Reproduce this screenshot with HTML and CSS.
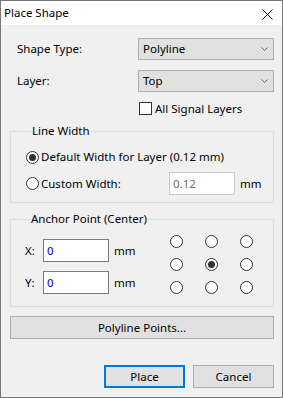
FILE: index.html
```html
<!doctype html>
<html lang="en">
  <head>
    <meta charset="UTF-8" />
    <meta name="viewport" content="width=device-width, initial-scale=1.0" />
    <title>Place Shape</title>
    <link rel="stylesheet" href="styles.css">
  </head>
  <body>
    <div class="dialog">
      <div class="titlebar">
        <span class="title">Place Shape</span>
        <svg class="close" width="11" height="11" viewBox="0 0 11 11">
          <path d="M0.5 0.5 L10.5 10.5 M10.5 0.5 L0.5 10.5" stroke="#000" stroke-width="1" fill="none" />
        </svg>
      </div>

      <div class="content">
        <div class="form-row">
          <span class="field-label">Shape Type:</span>
          <div class="combo">
            <span>Polyline</span>
            <svg class="chevron" width="7" height="4" viewBox="0 0 7 4">
              <path d="M0.5 0.5 L3.5 3.5 L6.5 0.5" stroke="#666" fill="none" />
            </svg>
          </div>
        </div>
        <div class="form-row">
          <span class="field-label">Layer:</span>
          <div class="combo">
            <span>Top</span>
            <svg class="chevron" width="7" height="4" viewBox="0 0 7 4">
              <path d="M0.5 0.5 L3.5 3.5 L6.5 0.5" stroke="#666" fill="none" />
            </svg>
          </div>
        </div>
        <label class="check-row">
          <span class="checkbox"></span>
          <span>All Signal Layers</span>
        </label>

        <fieldset class="group line-width">
          <legend>Line Width</legend>
          <label class="radio-row first">
            <span class="radio checked"></span>
            <span>Default Width for Layer (0.12 mm)</span>
          </label>
          <div class="custom-row">
            <label class="radio-row">
              <span class="radio"></span>
              <span>Custom Width:</span>
            </label>
            <input class="text-input disabled" type="text" value="0.12" />
            <span class="unit">mm</span>
          </div>
        </fieldset>

        <fieldset class="group anchor">
          <legend>Anchor Point (Center)</legend>
          <div class="anchor-body">
            <div class="coords">
              <div class="coord-row">
                <span class="coord-label">X:</span>
                <input class="text-input value" type="text" value="0" />
                <span class="unit">mm</span>
              </div>
              <div class="coord-row">
                <span class="coord-label">Y:</span>
                <input class="text-input value" type="text" value="0" />
                <span class="unit">mm</span>
              </div>
            </div>
            <div class="anchor-grid">
              <span class="radio"></span>
              <span class="radio"></span>
              <span class="radio"></span>
              <span class="radio"></span>
              <span class="radio checked"></span>
              <span class="radio"></span>
              <span class="radio"></span>
              <span class="radio"></span>
              <span class="radio"></span>
            </div>
          </div>
        </fieldset>

        <button class="btn wide">Polyline Points...</button>

        <div class="footer">
          <button class="btn default">Place</button>
          <button class="btn">Cancel</button>
        </div>
      </div>
    </div>
  </body>
</html>
```

FILE: styles.css
```css
* {
  box-sizing: border-box;
}
body {
  margin: 0;
  font-family: "Noto Sans", "Liberation Sans", sans-serif;
  font-size: 11.5px;
  line-height: 16px;
  color: #000;
}
.dialog {
  width: 283px;
  height: 398px;
  border: 1px solid #777;
  background-color: #f0f0f0;
  display: flex;
  flex-direction: column;
}
.titlebar {
  height: 24px;
  background-color: #fff;
  display: flex;
  align-items: center;
  justify-content: space-between;
  padding: 0 9px 0 3px;
}
.close {
  margin-top: 2px;
}
.content {
  flex: 1;
  display: flex;
  flex-direction: column;
  padding: 13px 8px 9px 9px;
}
.form-row {
  display: grid;
  grid-template-columns: 128px 136px;
  align-items: center;
  height: 22px;
  margin-bottom: 10px;
}
.field-label {
  padding-left: 7px;
}
.combo {
  height: 22px;
  display: flex;
  align-items: center;
  justify-content: space-between;
  padding: 0 5px 0 4px;
  background-color: #e1e1e1;
  border: 1px solid #adadad;
}
.check-row {
  display: flex;
  align-items: center;
  gap: 3px;
  margin-left: 129px;
  height: 13px;
}
.checkbox {
  width: 13px;
  height: 13px;
  border: 1px solid #333;
  background-color: #fff;
}
.group {
  margin: 8px 0 0;
  padding: 0;
  border: 1px solid #dcdcdc;
  min-width: 0;
}
.group legend {
  margin-left: 5px;
  padding: 0 1px;
  line-height: 16px;
}
.line-width {
  padding: 10px 0 7px 15px;
}
.radio-row {
  display: flex;
  align-items: center;
  gap: 2px;
  height: 16px;
}
.radio {
  width: 13px;
  height: 13px;
  border: 1px solid #333;
  border-radius: 50%;
  background-color: #fff;
  display: flex;
  align-items: center;
  justify-content: center;
}
.radio.checked::after {
  content: "";
  width: 7px;
  height: 7px;
  border-radius: 50%;
  background-color: #333;
}
.custom-row {
  display: grid;
  grid-template-columns: 143px 66px auto;
  align-items: center;
  margin-top: 7px;
}
.text-input {
  height: 23px;
  width: 66px;
  margin: 0;
  padding: 0 3px;
  font: inherit;
  background-color: #fff;
  border: 1px solid #7a7a7a;
  outline: none;
}
.text-input.disabled {
  border-color: #ccc;
  color: #6d6d6d;
}
.text-input.value {
  color: #0000c8;
}
.unit {
  margin-left: 5px;
}
.anchor {
  padding: 8px 0 12px 14px;
}
.anchor-body {
  display: grid;
  grid-template-columns: 145px auto;
}
.coords {
  display: flex;
  flex-direction: column;
  gap: 9px;
  margin-top: 4px;
}
.coord-row {
  display: grid;
  grid-template-columns: 18px 66px auto;
  align-items: center;
}
.anchor-grid {
  display: grid;
  grid-template-columns: repeat(3, 13px);
  grid-auto-rows: 13px;
  column-gap: 22px;
  row-gap: 10px;
}
.btn {
  height: 23px;
  margin: 0;
  padding: 0;
  font: inherit;
  color: #000;
  background-color: #e1e1e1;
  border: 1px solid #adadad;
}
.btn.wide {
  margin-top: 9px;
  width: 100%;
}
.footer {
  margin-top: auto;
  display: flex;
  justify-content: flex-end;
  gap: 8px;
}
.footer .btn {
  width: 81px;
}
.btn.default {
  border: 2px solid #0078d7;
}
```
